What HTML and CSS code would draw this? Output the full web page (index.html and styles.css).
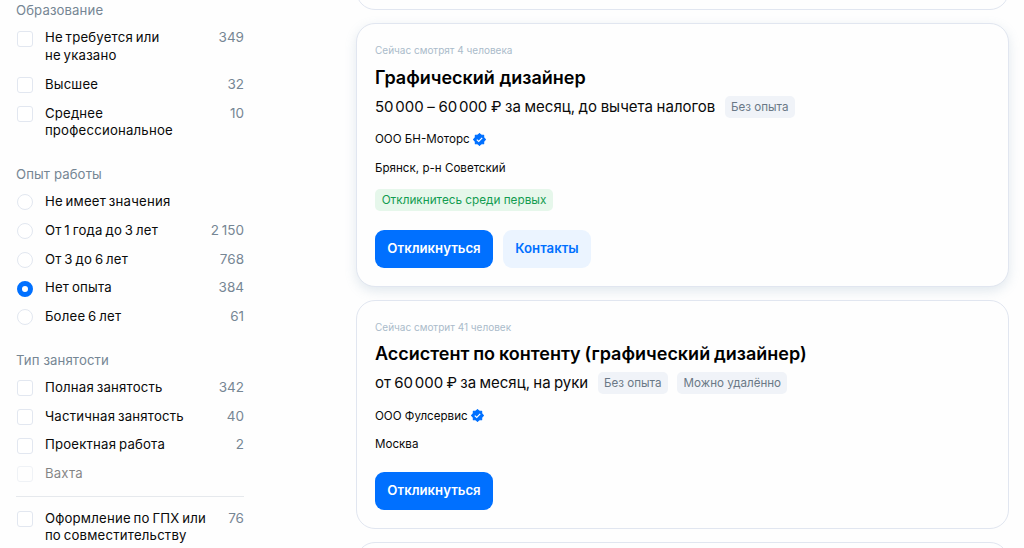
FILE: index.html
```html
<!DOCTYPE html>
<html lang="ru">
<head>
<meta charset="utf-8">
<title>Вакансии</title>
<link rel="stylesheet" href="styles.css">
</head>
<body>
<svg class="sprite" aria-hidden="true">
  <symbol id="verified" viewBox="0 0 24 24">
    <g fill="#0070ff" stroke="#0070ff" stroke-width="2" stroke-linejoin="round">
      <rect x="4.300" y="4.300" width="15.400" height="15.400"/>
      <rect x="4.300" y="4.300" width="15.400" height="15.400" transform="rotate(45 12 12)"/>
    </g>
    <path fill="none" stroke="#fff" stroke-width="2.300" d="M7 12.200l3.600 3.400 6.400-6.600"/>
  </symbol>
</svg>
<div class="page">
  <aside class="filters">
    <section class="group">
      <h3 class="group-title">Образование</h3>
      <label class="item"><i class="box"></i><span class="label">Не требуется или<br>не указано</span><span class="count">349</span></label>
      <label class="item"><i class="box"></i><span class="label">Высшее</span><span class="count">32</span></label>
      <label class="item"><i class="box"></i><span class="label">Среднее<br>профессиональное</span><span class="count">10</span></label>
    </section>
    <section class="group">
      <h3 class="group-title">Опыт работы</h3>
      <label class="item"><i class="box radio"></i><span class="label">Не имеет значения</span></label>
      <label class="item"><i class="box radio"></i><span class="label">От 1 года до 3 лет</span><span class="count">2 150</span></label>
      <label class="item"><i class="box radio"></i><span class="label">От 3 до 6 лет</span><span class="count">768</span></label>
      <label class="item"><i class="box radio checked"></i><span class="label">Нет опыта</span><span class="count">384</span></label>
      <label class="item"><i class="box radio"></i><span class="label">Более 6 лет</span><span class="count">61</span></label>
    </section>
    <section class="group">
      <h3 class="group-title">Тип занятости</h3>
      <label class="item"><i class="box"></i><span class="label">Полная занятость</span><span class="count">342</span></label>
      <label class="item"><i class="box"></i><span class="label">Частичная занятость</span><span class="count">40</span></label>
      <label class="item"><i class="box"></i><span class="label">Проектная работа</span><span class="count">2</span></label>
      <label class="item disabled"><i class="box"></i><span class="label">Вахта</span></label>
      <hr class="divider">
      <label class="item"><i class="box"></i><span class="label">Оформление по ГПХ или<br>по совместительству</span><span class="count">76</span></label>
    </section>
  </aside>
  <main class="results">
    <article class="card card-prev"></article>
    <article class="card raised">
      <p class="viewers">Сейчас смотрят 4 человека</p>
      <h2 class="title">Графический дизайнер</h2>
      <div class="pay-row"><span class="pay"><span class="sum">50 000</span> – <span class="sum">60 000</span> ₽ за месяц, до вычета налогов</span><span class="tag">Без опыта</span></div>
      <div class="company"><span>ООО БН-Моторс</span><svg class="badge"><use href="#verified"/></svg></div>
      <p class="city">Брянск, р-н Советский</p>
      <span class="tag green">Откликнитесь среди первых</span>
      <div class="actions"><button class="btn primary">Откликнуться</button><button class="btn secondary">Контакты</button></div>
    </article>
    <article class="card">
      <p class="viewers">Сейчас смотрит 41 человек</p>
      <h2 class="title long">Ассистент по контенту (графический дизайнер)</h2>
      <div class="pay-row"><span class="pay tight">от <span class="sum">60 000</span> ₽ за месяц, на руки</span><span class="tag">Без опыта</span><span class="tag">Можно удалённо</span></div>
      <div class="company"><span>ООО Фулсервис</span><svg class="badge"><use href="#verified"/></svg></div>
      <p class="city">Москва</p>
      <div class="actions"><button class="btn primary">Откликнуться</button></div>
    </article>
    <article class="card card-next"></article>
  </main>
</div>
</body>
</html>
```
FILE: styles.css
```css
* { box-sizing: border-box; margin: 0; padding: 0; }
body { width: 1024px; height: 548px; overflow: hidden; background: #fefefe; color: #0a0a0a; font-family: Inter, "Noto Sans", sans-serif; }
.sprite { position: absolute; width: 0; height: 0; }
.page { display: flex; height: 548px; overflow: hidden; }
.filters { width: 228px; margin-left: 16px; padding-top: 1.300px; flex: none; }
.group { padding-bottom: 14.300px; }
.group-title { height: 18px; line-height: 18px; margin-bottom: 10.200px; font-size: 13.200px; font-weight: 400; color: #768694; letter-spacing: .1px; white-space: nowrap; }
.group + .group { margin-top: -.3px; }
.item { display: flex; align-items: flex-start; padding-bottom: 11px; font-size: 13.200px; line-height: 17.700px; }
.box { flex: none; width: 16px; height: 16px; margin: 1.300px 11.500px -4px 1.400px; border: 1px solid #e2e7f0; border-radius: 3px; background: #fff; }
.radio { border-radius: 50%; }
.checked { border: 5px solid #0070ff; }
.label { flex: 1; white-space: nowrap; letter-spacing: .2px; word-spacing: -1.100px; }
.count { color: #768694; font-size: 13.500px; line-height: 17px; word-spacing: -1px; }
.disabled { opacity: .5; }
.divider { border: 0; height: 1px; background: #e6e9ed; margin: 2.200px 0 12.700px; }
.results { width: 653px; margin-left: 111.500px; flex: none; display: flex; flex-direction: column; gap: 13px; }
.card { flex: none; border: 1px solid #e1e6f0; border-radius: 19px; background: #fefefe; padding: 18px 18.500px; height: 229px; }
.card-prev { height: 40px; margin-top: -29.600px; }
.raised { height: 263.300px; box-shadow: 0 4px 12px rgba(112, 146, 177, .2); }
.viewers { height: 16px; line-height: 16px; font-size: 10px; color: #aabbca; white-space: nowrap; }
.title { height: 24px; line-height: 24px; margin-top: 7.200px; font-size: 18px; font-weight: 600; color: #000; white-space: nowrap; }
.long { word-spacing: -.7px; }
.pay-row { display: flex; align-items: center; gap: 9.500px; height: 22px; margin-top: 6.500px; white-space: nowrap; }
.pay { font-size: 15px; line-height: 18px; padding-bottom: .4px; word-spacing: -.6px; }
.tight { word-spacing: -.9px; }
.sum { word-spacing: -2.500px; }
.tag { display: inline-flex; align-items: center; justify-content: center; height: 22px; padding: 0 6.300px; border-radius: 5px; background: #f0f3f8; color: #6a7886; font-size: 11.600px; white-space: nowrap; }
.company { display: flex; align-items: center; gap: 3px; height: 18px; margin-top: 12.200px; font-size: 11.600px; }
.badge { width: 13px; height: 13px; }
.city { height: 18px; line-height: 18px; margin-top: 10.500px; font-size: 11.600px; }
.green { display: flex; width: 178px; margin-top: 12px; background: #e6f7eb; color: #139c50; font-size: 11.750px; }
.actions { display: flex; gap: 10px; margin-top: 18.800px; }
.btn { height: 38px; padding-bottom: 2px; border: 0; border-radius: 9px; font-family: inherit; font-size: 13.200px; font-weight: 600; text-align: center; white-space: nowrap; }
.primary { width: 118px; background: #0070ff; color: #fff; }
.secondary { width: 88px; background: #ebf4ff; color: #0070ff; }
```
